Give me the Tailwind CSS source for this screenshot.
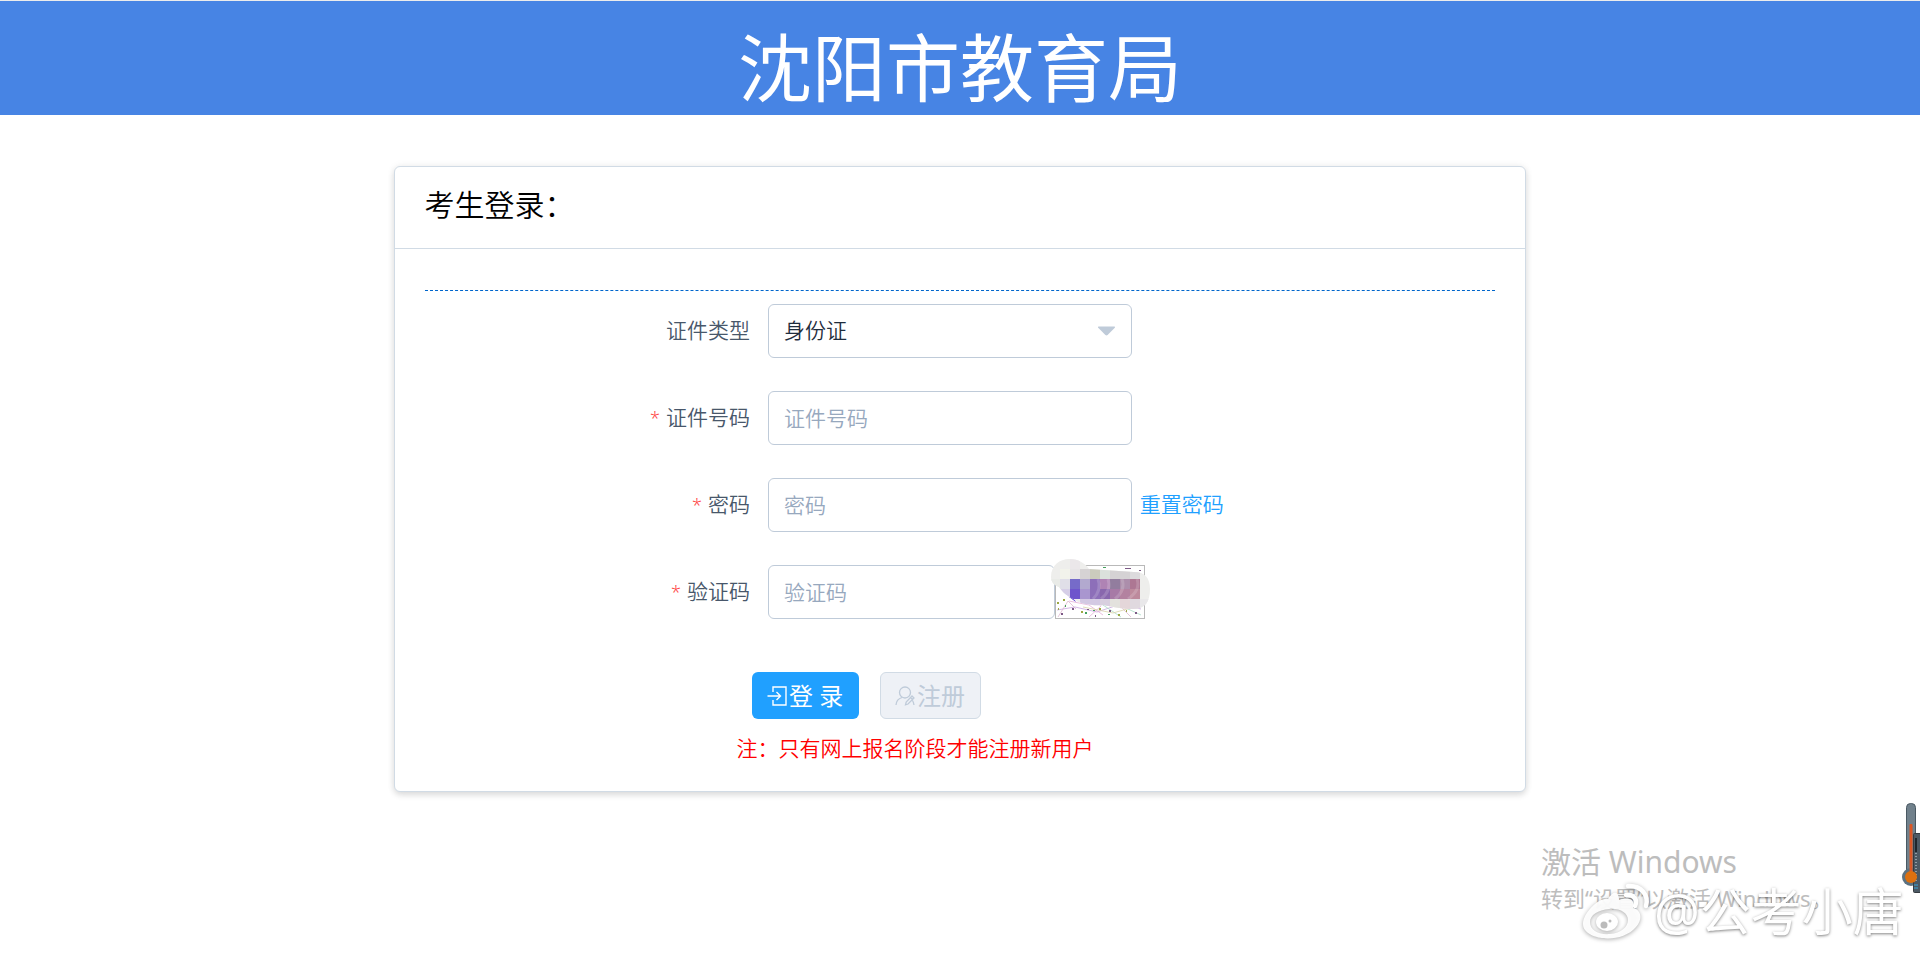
<!DOCTYPE html>
<html lang="zh-CN">
<head>
<meta charset="utf-8">
<meta name="viewport" content="width=device-width, initial-scale=1">
<title>沈阳市教育局</title>
<script src="https://cdn.jsdelivr.net/npm/@tailwindcss/browser@4"></script>
</head>
<body class="relative min-h-screen overflow-x-hidden bg-white font-['Noto_Sans','Noto_Sans_CJK_SC',sans-serif] text-[21px] font-[350] text-[#48576a]">
<header class="flex h-[115px] items-center justify-center border-t border-[#ececec] bg-[#4784e4] pt-[20px]">
  <h1 class="text-[74px] leading-none font-normal text-white">沈阳市教育局</h1>
</header>

<main class="mx-auto mt-[51px] w-[59%] rounded-md border border-[#d1dbe5] bg-white shadow-[0_3px_6px_rgba(0,0,0,0.12),0_0_9px_rgba(0,0,0,0.06)]">
  <div class="border-b border-[#d1dbe5] px-[30px] pt-[18px] pb-[23px]">
    <h2 class="text-[30px] leading-10 font-[350] text-black">考生登录：</h2>
  </div>
  <form class="px-[30px] pt-[41px] pb-[27px]">
    <div class="border-t border-dashed border-[#0066cc]"></div>
    <div class="mt-[13px] flex flex-col gap-[33px] pl-px">
      <div class="flex items-center">
        <label for="idtype" class="w-[32%] pr-[18px] text-right">证件类型</label>
        <div class="relative w-[34%]">
          <select id="idtype" class="h-[54px] w-full appearance-none rounded-md border border-[#bfcbd9] bg-white px-[15px] text-[#1f2d3d]"><option>身份证</option></select>
          <svg class="pointer-events-none absolute top-[22px] right-[16px] h-[10px] w-[19px]" viewBox="0 0 19 10"><path d="M1.5 0.5h16q1 0.3 0.3 1.2L10.6 9q-1.1 0.9-2.2 0L1.2 1.7Q0.5 0.8 1.5 0.5z" fill="#bfcbd9"/></svg>
        </div>
      </div>
      <div class="flex items-center">
        <label for="idno" class="w-[32%] pr-[18px] text-right"><span class="mr-1.5 text-[18px] text-[#ff4949]">*</span>证件号码</label>
        <input id="idno" type="text" placeholder="证件号码" class="h-[54px] w-[34%] rounded-md border border-[#bfcbd9] px-[15px] text-[#1f2d3d] placeholder:text-[#97a8be]">
      </div>
      <div class="flex items-center">
        <label for="pwd" class="w-[32%] pr-[18px] text-right"><span class="mr-1.5 text-[18px] text-[#ff4949]">*</span>密码</label>
        <input id="pwd" type="password" placeholder="密码" class="h-[54px] w-[34%] rounded-md border border-[#bfcbd9] px-[15px] text-[#1f2d3d] placeholder:text-[#97a8be]">
        <a href="#" class="ml-2 text-[#20a0ff]">重置密码</a>
      </div>
      <div class="flex items-center">
        <label for="code" class="w-[32%] pr-[18px] text-right"><span class="mr-1.5 text-[18px] text-[#ff4949]">*</span>验证码</label>
        <input id="code" type="text" placeholder="验证码" class="h-[54px] w-[287px] rounded-md border border-[#bfcbd9] px-[15px] text-[#1f2d3d] placeholder:text-[#97a8be]">
        <svg class="h-[54px] w-[90px] shrink-0 overflow-visible" viewBox="0 0 90 54" role="img" aria-label="验证码图片">
          <rect x="0.5" y="0.5" width="89" height="53" fill="#fff" stroke="#b9b9b9"/>
          <g fill="none" stroke-width="0.8">
            <path d="M2 45l18-3 22 5 24-8 20 5" stroke="#c9a6e0"/><path d="M14 36l20 4 14 10M34 52l12-11" stroke="#e6b0d8"/><path d="M48 40l18 12M60 38l26 12" stroke="#a8dcc4"/><path d="M3 52l10-16 8 8M66 42l10 10" stroke="#ddb6cf"/><path d="M28 42l30 6 28-8" stroke="#d8d2a8"/>
          </g>
          <g fill="#7d5a86"><path d="M6 48h2v2H6zM17 43h2v2h-2zM40 50h1v2h-1zM54 45h2v2h-2zM80 47h2v2h-2zM84 5h2v1h-2zM70 3h6v1h-6zM32 44h2v1h-2z"/></g>
          <g fill="#9ba843"><path d="M2 37h2v2H2zM8 34h2v2H8zM26 46h2v2h-2zM44 43h2v2h-2zM63 49h2v2h-2zM3 43h1v2H3zM71 45h1v2h-1z"/></g>
          <g fill="#46a05e"><path d="M30 47h2v2h-2zM38 45h2v1h-2zM53 49h2v1h-2zM10 40h1v2h-1zM48 2h3v1h-3z"/></g>
          <path d="M14 32l7 5-3-5z" fill="#4a2fd0"/>
          <clipPath id="smear"><path d="M-4 12C-4 0 5-6 14-6c10 0 17 5 20 10l45 3c11 0 16 6 16 17 0 13-5 20-17 20-12 0-19-2-29-4-12 1-24-1-31-6C10 30 6 25 4 22-1 20-4 17-4 12z"/></clipPath>
          <g clip-path="url(#smear)">
            <rect x="-6" y="-8" width="104" height="56" fill="#eeeeec"/>
            <path d="M5 4h10v10H5z" fill="#f2f3eb"/><path d="M15-8h10V4H15z" fill="#ebe7ea"/><path d="M15 4h10v10H15z" fill="#e8e5e7"/><path d="M25 4h10v10H25z" fill="#d6d3d4"/><path d="M35 4h10v10H35z" fill="#cbcbbd"/><path d="M45 4h10v10H45z" fill="#dbe1dc"/><path d="M55 4h20v10H55z" fill="#d5d2d4"/><path d="M75 4h10v10H75z" fill="#dcdadd"/>
            <path d="M-4 14h9v10h-9z" fill="#e9ebe7"/><path d="M5 14h10v10H5z" fill="#e0dfe8"/><path d="M5 24h10v12H5z" fill="#d6cfe7"/>
            <path d="M15 14h10v10H15z" fill="#766bc9"/><path d="M15 24h10v10H15z" fill="#6e55cc"/>
            <path d="M25 14h10v10H25z" fill="#b2a9cf"/><path d="M25 24h10v10H25z" fill="#a996cf"/>
            <path d="M35 14h10v20H35z" fill="#8d6fb9"/><path d="M45 14h10v10H45z" fill="#af83b4"/><path d="M45 24h10v10H45z" fill="#8967ad"/>
            <path d="M55 14h10v10H55z" fill="#927d9e"/><path d="M55 24h10v10H55z" fill="#a77aa6"/><path d="M65 14h10v10H65z" fill="#ac8eab"/><path d="M65 24h10v10H65z" fill="#b382a0"/>
            <path d="M75 14h10v10H75z" fill="#ad7793"/><path d="M75 24h10v10H75z" fill="#bd8a9c"/>
            <path d="M25 34h30v10H25z" fill="#d3c9e3"/><path d="M45 34h10v10H45z" fill="#d8cfdf"/><path d="M55 34h10v10H55z" fill="#e3e2dd"/><path d="M65 34h10v12H65z" fill="#e4d6d9"/><path d="M75 34h10v12H75z" fill="#e0d9df"/><path d="M85 34h14v12H85z" fill="#e9e8ea"/>
            <g fill="none" stroke="#fff" stroke-opacity=".16" stroke-width="3"><path d="M43 14q4 11-5 20M53 14q4 11-7 20M67 14q4 11-7 20M82 14q4 11-9 20"/></g>
          </g>
        </svg>
      </div>
    </div>
    <div class="mt-[53px] flex gap-[21px] pl-[327px]">
      <button type="button" class="flex h-[47px] w-[107px] items-center justify-center rounded-md bg-[#20a0ff] text-[24px] font-normal text-white">
        <svg class="mr-0.5 h-5 w-5" viewBox="0 0 20 20" fill="none" stroke="currentColor" stroke-width="1.4"><path d="M6 6V1h13v18H6v-5M0.5 10H13M9.500 6L13.500 10l-4 4"/></svg>登 录
      </button>
      <button type="button" disabled class="flex h-[47px] w-[101px] items-center justify-center rounded-md border border-[#d1dbe5] bg-[#eef1f6] text-[24px] font-normal text-[#bfcbd9]">
        <svg class="mr-0.5 h-5 w-5" viewBox="0 0 20 20" fill="none" stroke="currentColor" stroke-width="1.3"><circle cx="10" cy="6.500" r="5.500"/><path d="M1 19c.3-4 2.500-6.500 6-7.500M17.500 14.500q1 1.500 1.500 4.500M17 10l2 2-6 6-2.500.8.7-2.800zM15.500 11.500l2 2"/></svg>注册
      </button>
    </div>
    <p class="mt-[13px] pl-[312px] leading-8 text-[#ff0000]">注：只有网上报名阶段才能注册新用户</p>
  </form>
</main>

<aside class="absolute top-[840px] left-[1541px] whitespace-nowrap font-normal text-[#bdbdbd]">
  <p class="text-[30px] leading-[44px]">激活 Windows</p>
  <p class="text-[22px] leading-7">转到“设置”以激活 Windows。</p>
</aside>

<div class="absolute top-[878px] left-[1580px] flex text-white">
  <svg class="h-[62px] w-[74px] shrink-0 overflow-visible drop-shadow-[0_1px_2px_rgba(0,0,0,0.35)]" viewBox="0 0 74 62">
    <path fill="#fff" fill-opacity=".94" fill-rule="evenodd" d="M28 21C19 19 3 35 3 46c0 16 38 21 53 3 8-9 4-18-3-19 3-8-4-12-14-8 0-8-5-11-11-1zM29 31c11-1 19 4 19 11 0 7-7 13-18 14-12 1-20-4-20-12 0-7 8-12 19-13z"/>
    <ellipse cx="27" cy="44" rx="11" ry="9" fill="#fff"/><circle cx="24" cy="47" r="3.500" fill="#bbb"/><circle cx="30" cy="43" r="1.500" fill="#bbb"/>
    <path d="M48 8c13-1 21 9 18 20M46 17c8-1 12 5 9 11" fill="none" stroke="#fff" stroke-width="4.500" stroke-linecap="round"/>
  </svg>
  <span class="text-[51px] leading-[66px] font-normal whitespace-nowrap text-white [text-shadow:0_1px_3px_rgba(0,0,0,0.5)]">@公考小唐</span>
</div>

<svg class="absolute top-[800px] right-0 h-[94px] w-5" viewBox="0 0 20 94" aria-hidden="true">
  <rect x="6.500" y="3.500" width="9" height="78" rx="4" fill="#71818c" stroke="#4a5963"/>
  <circle cx="11" cy="77" r="9" fill="#5d7280"/>
  <rect x="13.500" y="33.500" width="9" height="59" rx="1" fill="#4c5964" stroke="#353b41"/>
  <rect x="15" y="38" width="2" height="14" fill="#20262c"/>
  <path d="M16 53v28" stroke="#a7b2ba" stroke-width="1.500" stroke-dasharray="1 2"/>
  <path d="M14 85h4M14 88h4" stroke="#37a5d8"/>
  <rect x="9.500" y="24" width="3" height="50" rx="1" fill="#dc5724"/>
  <circle cx="11" cy="77" r="6" fill="#dc7010"/>
</svg>
</body>
</html>
